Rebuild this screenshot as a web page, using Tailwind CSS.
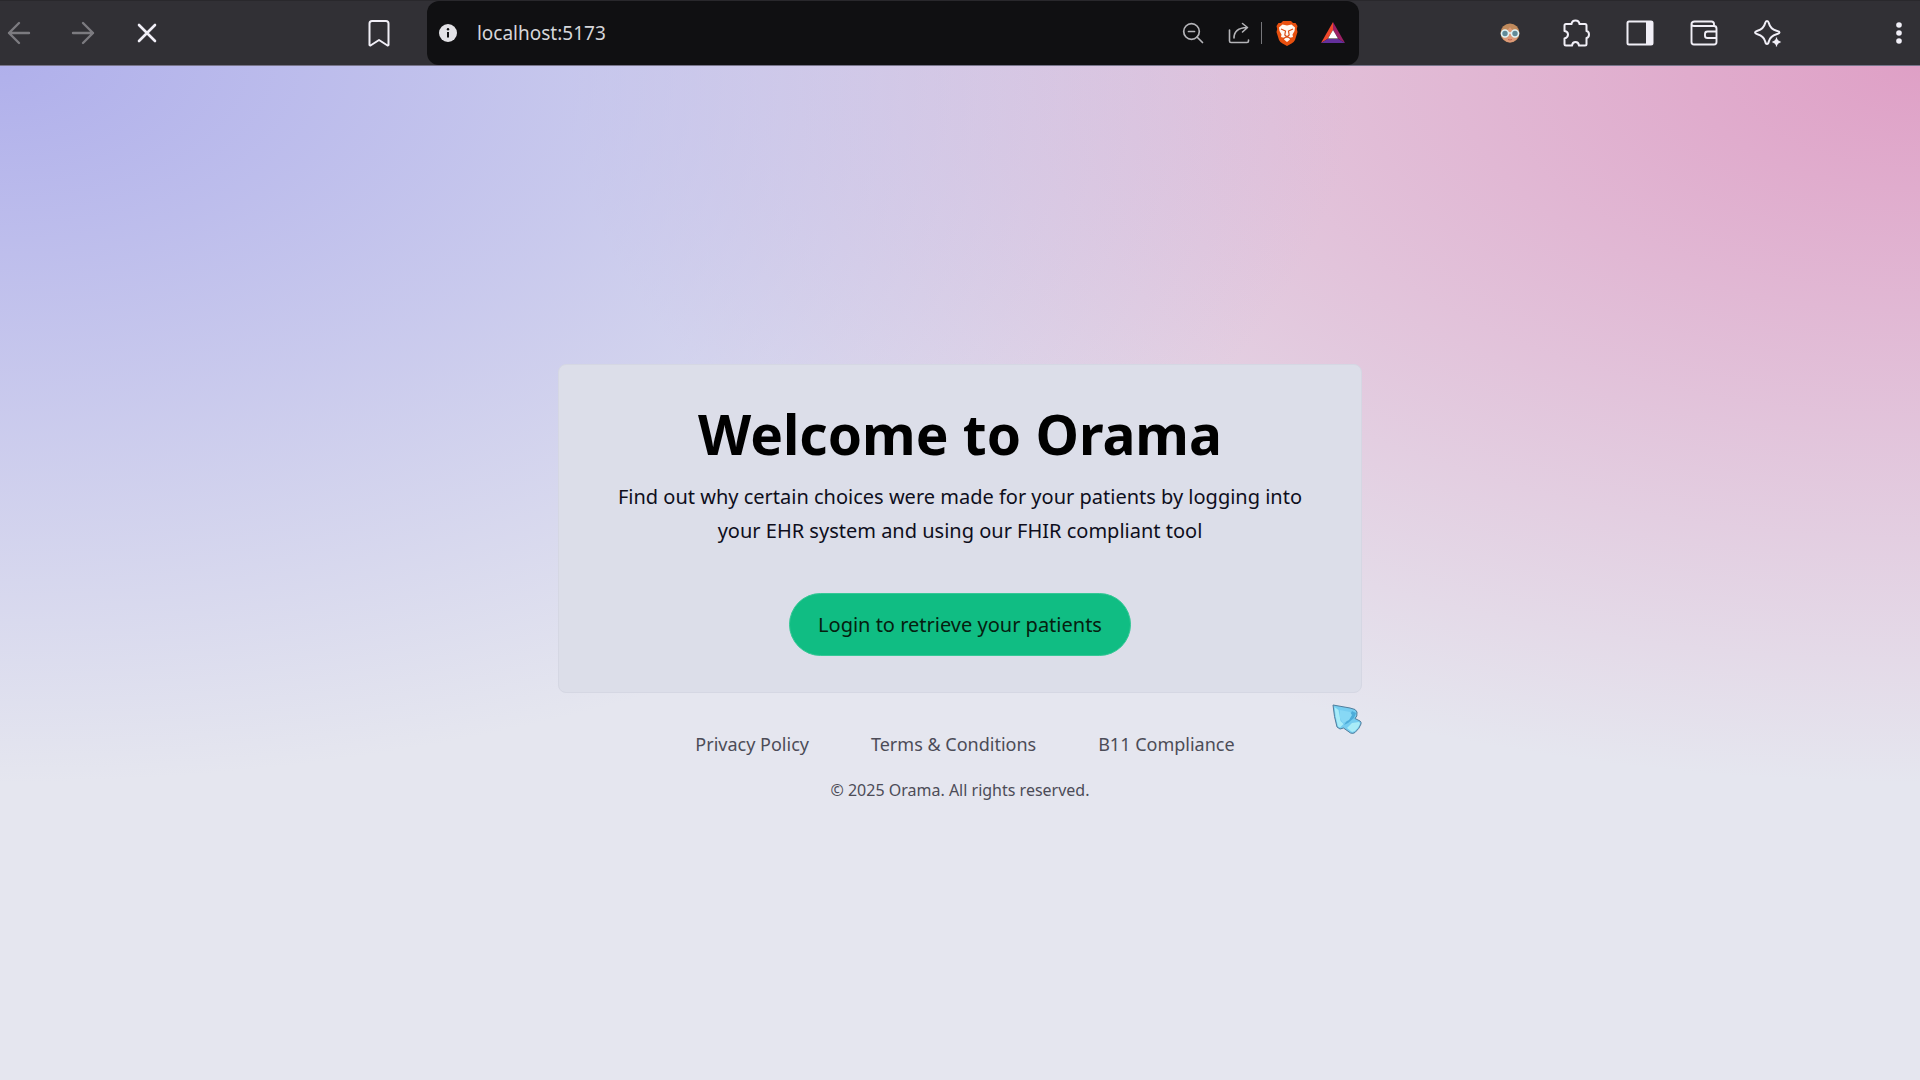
<!DOCTYPE html>
<html lang="en">

<head>
  <meta charset="utf-8">
  <title>Orama</title>
  <meta name="viewport" content="width=device-width, initial-scale=1.0">
  <script src="https://cdn.jsdelivr.net/npm/@tailwindcss/browser@4"></script>
</head>

<body class="min-h-screen flex flex-col bg-[#e5e6ef] font-['Segoe_UI','Noto_Sans',sans-serif]">

  <!-- Browser toolbar -->
  <header class="relative z-10 flex items-center h-[66px] bg-[#313035] border-t border-b border-t-[#29282c] border-b-[#77748a] text-[#f1eff7]">
    <nav class="flex flex-[43] items-center pl-[3px]">
      <button type="button" aria-label="Back" class="size-8 flex items-center justify-center text-[#7c7b80]">
        <svg class="size-6" viewBox="0 0 24 24" fill="none" stroke="currentColor" stroke-width="2.400" stroke-linecap="round" stroke-linejoin="round"><path d="M22 12H2M12 2L2 12l10 10" /></svg>
      </button>
      <button type="button" aria-label="Forward" class="size-8 ml-8 flex items-center justify-center text-[#7c7b80]">
        <svg class="size-6" viewBox="0 0 24 24" fill="none" stroke="currentColor" stroke-width="2.400" stroke-linecap="round" stroke-linejoin="round"><path d="M2 12h20M12 2l10 10-10 10" /></svg>
      </button>
      <button type="button" aria-label="Stop" class="size-8 ml-8 flex items-center justify-center">
        <svg class="size-6" viewBox="0 0 24 24" fill="none" stroke="currentColor" stroke-width="2.600" stroke-linecap="round"><path d="M4 4l16 16M20 4L4 20" /></svg>
      </button>
      <button type="button" aria-label="Bookmark" class="size-8 ml-auto mr-8 flex items-center justify-center">
        <svg class="w-6 h-7" viewBox="0 0 24 28" fill="none" stroke="currentColor" stroke-width="2" stroke-linejoin="round"><path d="M5 2h14q2.500 0 2.500 2.500V26l-1 .5-8.500-5.500-8.500 5.500-1-.5V4.500Q2.500 2 5 2z" /></svg>
      </button>
    </nav>

    <div class="flex items-center w-[932px] h-16 px-3 bg-[#101012] rounded-xl text-[#d6d6da]">
      <svg class="size-[18px] mr-[20px]" viewBox="0 0 18 18"><circle cx="9" cy="9" r="9" fill="#e3e2e6" /><circle cx="9" cy="5.300" r="1.200" fill="#101012" /><path d="M9 8v5.500" stroke="#101012" stroke-width="2" /></svg>
      <input type="text" aria-label="Address" value="localhost:5173" class="flex-1 min-w-0 text-[19px] leading-7 bg-transparent outline-none">
      <div class="flex items-center">
        <button type="button" aria-label="Zoom out" class="mr-6">
          <svg class="size-[22px]" viewBox="0 0 22 22" fill="none" stroke="#b4b4b8" stroke-width="1.700" stroke-linecap="round"><circle cx="9.500" cy="9.500" r="7.800" /><path d="M6.500 9.500h6M15 15l5.500 5.500" /></svg>
        </button>
        <button type="button" aria-label="Share">
          <svg class="size-[22px]" viewBox="0 0 22 22" fill="none" stroke="#b4b4b8" stroke-width="1.600" stroke-linecap="round" stroke-linejoin="round"><path d="M1.500 8v11q0 1.500 1.500 1.500h16q1.500 0 1.500-1.500v-1M6 16q0-10 13-10.500M14.500 1.500L19.500 5.500l-5 4.500" /></svg>
        </button>
        <span class="w-px h-[22px] ml-[11px] mr-[14px] bg-[#77777b]"></span>
        <button type="button" aria-label="Brave Shields" class="mr-[23px]">
          <svg class="w-[22px] h-[26px]" viewBox="0 0 22 26"><path fill="#e8500f" d="M7 1h8l2 2 2.500 0L21.500 6l-.7 3 .7 3-2.500 8q-1 2-3.500 3.500L11 26l-4.500-2.500Q4 22 3 20L.5 12l.7-3L.5 6l2-3H5z" /><path fill="#fff8f2" d="M6.500 4.500L11 5.500l4.500-1L19 7.500l-.5 3.500-2 3.500 .5 2.500-3.500 1 .5 1.500-3 2.500-3-2.500.5-1.500-3.500-1 .5-2.500-2-3.500L3 7.500z" /><path fill="none" stroke="#d94a12" stroke-width="1.200" d="M5 9l4.500 2-.7 4L11 17l2.200-2-.7-4L17 9M7.500 18.500L11 16.500l3.500 2" /></svg>
        </button>
        <button type="button" aria-label="Brave Rewards">
          <svg class="w-6 h-[22px] mr-[2px]" viewBox="0 0 24 22"><path fill="#f0482c" d="M12 0L0 21l6.500-4L12 8z" /><path fill="#9b2065" d="M12 0l12 21-6.500-4L12 8z" /><path fill="#64309c" d="M0 21h24l-6.500-4h-11z" /><path fill="#fff" d="M12 8l5 8.500H7z" /></svg>
        </button>
      </div>
    </div>

    <nav class="flex flex-[56] items-center justify-end pr-[9px]">
      <button type="button" aria-label="Profile" class="size-8 flex items-center justify-center">
        <svg class="size-5" viewBox="0 0 20 20"><circle cx="10" cy="10" r="9.500" fill="#c08a5c" /><path fill="#dd9a78" d="M2 9q6-1 8-5 2 4 8 5v3q-1 7-8 7.500Q3 19 2 12z" /><circle cx="5" cy="10.500" r="3.500" fill="#628a97" stroke="#e1f3f5" stroke-width="1.600" /><circle cx="15" cy="10.500" r="3.500" fill="#628a97" stroke="#e1f3f5" stroke-width="1.600" /><path d="M8 10h4" stroke="#e1f3f5" stroke-width="1.500" /><path d="M8 16.500q2 1 4 0" stroke="#c45c4c" fill="none" /></svg>
      </button>
      <button type="button" aria-label="Extensions" class="size-8 ml-[34px] flex items-center justify-center">
        <svg class="size-7" viewBox="0 0 28 28" fill="none" stroke="currentColor" stroke-width="2" stroke-linejoin="round"><path d="M4 5h5.500Q10 1.500 13.500 1.500T17.500 5H23q1.500 0 1.500 1.500V12q2.500.5 2.500 3.500t-2.500 3.500v6q0 1.500-1.500 1.500h-6q-.5-3.500-3.500-3.500t-3.500 3.500H4q-1.500 0-1.500-1.500v-5.500Q6 18.500 6 15.500T2.500 12V6.500Q2.500 5 4 5z" /></svg>
      </button>
      <button type="button" aria-label="Side panel" class="size-8 ml-8 flex items-center justify-center">
        <svg class="w-7 h-[26px]" viewBox="0 0 28 26"><rect x="1.500" y="1.500" width="25" height="23" rx="1.500" fill="none" stroke="currentColor" stroke-width="2" /><path fill="currentColor" d="M20 1h6l1 1v22l-1 1h-6z" /></svg>
      </button>
      <button type="button" aria-label="Wallet" class="size-8 ml-8 flex items-center justify-center">
        <svg class="w-7 h-[26px]" viewBox="0 0 28 26" fill="none" stroke="currentColor" stroke-width="1.900" stroke-linejoin="round"><path d="M24 6V4q0-2.500-2.500-2.500h-17Q1.500 1.500 1.500 4v18q0 2.500 2.500 2.500h20q2.500 0 2.500-2.500V8.500Q26.500 6 24 6H4Q1.500 6 1.500 4" /><path d="M26.500 11.500h-9q-2.500 0-2.500 2.500v2q0 2 2.500 2h9" /></svg>
      </button>
      <button type="button" aria-label="Leo AI" class="size-8 ml-8 flex items-center justify-center">
        <svg class="size-7" viewBox="0 0 28 28" fill="none" stroke="currentColor" stroke-width="2" stroke-linejoin="round"><path d="M13 2q1.300 0 1.800 2 1.500 6 7.700 7.700 3 .8 3 1.800t-3 1.800q-6.200 1.700-7.700 7.200-.5 2.500-1.800 2.500t-1.800-2.500Q9.700 17 3.500 15.300q-2.500-.8-2.500-1.800t2.500-1.800Q9.700 10 11.200 4 11.700 2 13 2z" /><path fill="currentColor" stroke="#313035" stroke-width="1" d="M22.500 17l1.900 4.100L28.500 23l-4.100 1.900L22.500 29l-1.900-4.100L16.500 23l4.100-1.900z" /></svg>
      </button>
      <button type="button" aria-label="Menu" class="w-6 h-8 ml-[103px] flex items-center justify-center">
        <svg class="w-6 h-6" viewBox="0 0 24 24" fill="currentColor"><circle cx="12" cy="4" r="2.800" /><circle cx="12" cy="12" r="2.800" /><circle cx="12" cy="20" r="2.800" /></svg>
      </button>
    </nav>
  </header>

  <!-- Landing page -->
  <main class="flex flex-1 flex-col items-center pt-[298px] px-4 bg-[radial-gradient(at_0%_0%,#b0b0eb,transparent_50%),radial-gradient(at_100%_0%,#dfa0c6,transparent_50%)]">
    <section class="relative w-full max-w-[804px] flex flex-col items-center pt-[39px] pb-9 px-12 bg-[#dcdee9] border border-[#d5d7e3] rounded-lg text-center">
      <h1 class="text-[55px] leading-[60px] font-bold text-black">Welcome to Orama</h1>
      <p class="mt-4 text-[20px] leading-[34px] text-[#0e0e1c]">Find out why certain choices were made for your patients by logging into your EHR system and using our FHIR compliant tool</p>
      <button type="button" class="mt-[45px] h-[63px] px-7 bg-[#10bd83] border border-[#35c896] rounded-full text-[20px] leading-8 text-[#06200f]">Login to retrieve your patients</button>

      <!-- Pointer -->
      <svg class="absolute -right-px top-[339px] w-[30px] h-[30px]" viewBox="0 0 30 30"><path fill="#76cdf0" stroke="#507d9c" stroke-width="1" stroke-linejoin="round" d="M1 1l17 3q6.500 1 7 4l-.2 4L23 14.500l5 2.500q1.500 1 1 3-1.500 4.500-6 8.500-2 1.500-4.500.5L11.500 24 8 25l-3-2Q2 13 1 1z" /><path fill="#a9ecf8" d="M2.500 3l4 3 2 11 3 3-3.500 3.500-2-1Q3.500 14 2.500 3zM15 24l5-5 7-1 1 1.500q-1 4-5 7.500l-3 1z" /><path fill="#4dacd9" d="M20 7l4 2-2 5-6 5-4 2 4-6z" /><path fill="#87d8f5" d="M8 6l10 2 2 3-3 5-6 3-3-5z" /></svg>
    </section>

    <footer class="flex flex-col items-center pt-[35px] text-[#4c4c57]">
      <nav class="flex gap-[62px] pl-[10px] text-[18px] leading-8">
        <a href="#">Privacy Policy</a>
        <a href="#">Terms &amp; Conditions</a>
        <a href="#">B11 Compliance</a>
      </nav>
      <p class="mt-4 text-[16px] leading-7">© 2025 Orama. All rights reserved.</p>
    </footer>
  </main>
</body>
</html>
